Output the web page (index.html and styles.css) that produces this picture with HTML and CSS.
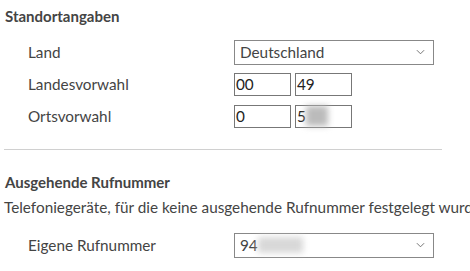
FILE: index.html
```html
<!DOCTYPE html>
<html lang="de">
<head>
<meta charset="utf-8">
<link rel="stylesheet" href="styles.css">
</head>
<body>
<div class="page">
  <section class="section">
    <h2 class="heading">Standortangaben</h2>
    <div class="rows">
      <div class="row">
        <span class="label">Land</span>
        <div class="select wide"><span class="value">Deutschland</span><svg class="chev" viewBox="0 0 10 6" width="9" height="6"><path d="M1 1 L5 5 L9 1" fill="none" stroke="#666" stroke-width="1"/></svg></div>
      </div>
      <div class="row">
        <span class="label">Landesvorwahl</span>
        <div class="pair"><span class="input">00</span><span class="input">49</span></div>
      </div>
      <div class="row">
        <span class="label">Ortsvorwahl</span>
        <div class="pair"><span class="input">0</span><span class="input">5<span class="blur b1"></span></span></div>
      </div>
    </div>
  </section>
  <hr class="divider">
  <section class="section second">
    <h2 class="heading">Ausgehende Rufnummer</h2>
    <p class="desc">Telefoniegeräte, für die keine ausgehende Rufnummer festgelegt wurden</p>
    <div class="row own">
      <span class="label">Eigene Rufnummer</span>
      <div class="select wide"><span class="value">94<span class="blur b2"></span></span><svg class="chev" viewBox="0 0 10 6" width="9" height="6"><path d="M1 1 L5 5 L9 1" fill="none" stroke="#666" stroke-width="1"/></svg></div>
    </div>
  </section>
</div>
</body>
</html>
```
FILE: styles.css
```css
html, body { margin: 0; padding: 0; background: #fff; }
body { width: 470px; height: 271px; overflow: hidden; font-family: "Lato", "Open Sans", sans-serif; color: #444; }
.page { padding: 0 0 0 4px; }
.heading { margin: 0; font-size: 15px; font-weight: bold; color: #444; line-height: 20px; padding-top: 6px; padding-left: 1px; }
.rows { padding-top: 10px; }
.row { display: flex; align-items: center; height: 32px; padding-left: 24px; }
.label { width: 206px; font-size: 15.3px; }
.select { box-sizing: border-box; height: 25px; border: 1px solid #888; display: flex; align-items: center; justify-content: space-between; padding: 0 8px 0 5px; font-size: 15.3px; background: #fff; }
.wide { width: 200px; }
.pair { display: flex; gap: 4px; }
.input { box-sizing: border-box; width: 57px; height: 23px; border: 1px solid #777; display: flex; align-items: center; padding-left: 1px; font-size: 15.3px; color: #222; position: relative; }
.select .value { color: #444; display: flex; align-items: center; }
.blur { display: inline-block; background: #ddd; filter: blur(3px); }
.b1 { width: 22px; height: 20px; background: #bbb; }
.b2 { width: 45px; height: 16px; background: #d8d8d8; }
.divider { border: 0; border-top: 1px solid #d0d0d0; margin: 17px 28px 0 0; }
.second .heading { padding-top: 22px; }
.desc { margin: 4px 0 0; font-size: 15.3px; line-height: 22px; white-space: nowrap; }
.own { margin-top: 11px; }
```
